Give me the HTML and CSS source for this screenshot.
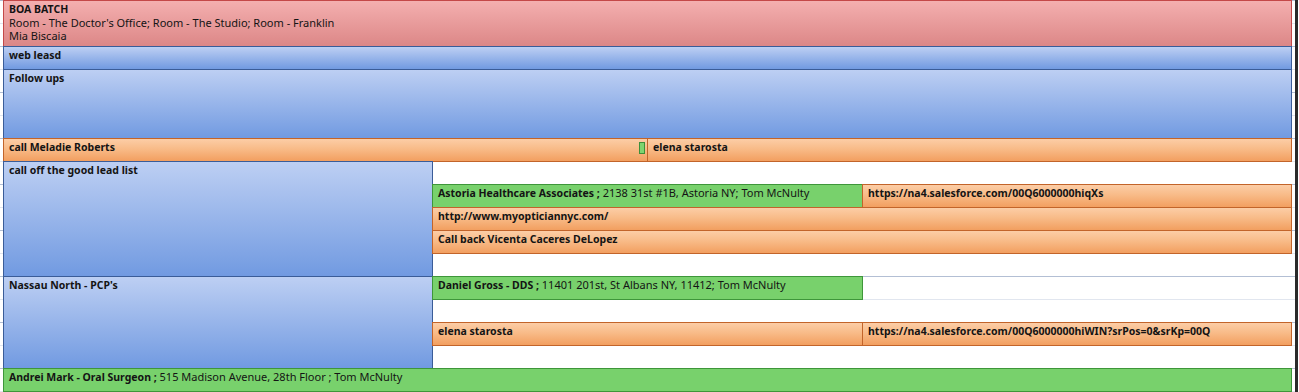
FILE: index.html
```html
<!DOCTYPE html>
<html lang="en">
<head>
    <meta charset="UTF-8">
    <title>Calendar - Day View</title>
    <link rel="stylesheet" href="styles.css">
</head>
<body>
    <div class="day">
        <div class="appt red" style="grid-row: 1 / 3; grid-column: 2 / 6;">
            <b>BOA BATCH</b><br>
            Room - The Doctor's Office; Room - The Studio; Room - Franklin<br>
            Mia Biscaia
        </div>
        <div class="appt blue" style="grid-row: 3; grid-column: 2 / 6;"><b>web leasd</b></div>
        <div class="appt blue" style="grid-row: 4 / 7; grid-column: 2 / 6;"><b>Follow ups</b></div>

        <div class="appt orange" style="grid-row: 7; grid-column: 2 / 4;">
            <b>call Meladie Roberts</b>
            <span class="marker"></span>
        </div>
        <div class="appt orange" style="grid-row: 7; grid-column: 4 / 6;"><b>elena starosta</b></div>

        <div class="appt blue" style="grid-row: 8 / 13; grid-column: 2;"><b>call off the good lead list</b></div>
        <div class="appt green" style="grid-row: 9; grid-column: 3 / 5;">
            <b>Astoria Healthcare Associates ;</b> 2138 31st #1B, Astoria NY; Tom McNulty
        </div>
        <div class="appt orange" style="grid-row: 9; grid-column: 5;"><b>https://na4.salesforce.com/00Q6000000hiqXs</b></div>
        <div class="appt orange" style="grid-row: 10; grid-column: 3 / 6;"><b>http://www.myopticiannyc.com/</b></div>
        <div class="appt orange" style="grid-row: 11; grid-column: 3 / 6;"><b>Call back Vicenta Caceres DeLopez</b></div>

        <div class="appt blue" style="grid-row: 13 / 17; grid-column: 2;"><b>Nassau North - PCP's</b></div>
        <div class="appt green" style="grid-row: 13; grid-column: 3 / 5;">
            <b>Daniel Gross - DDS ;</b> 11401 201st, St Albans NY, 11412; Tom McNulty
        </div>
        <div class="appt orange" style="grid-row: 15; grid-column: 3 / 5;"><b>elena starosta</b></div>
        <div class="appt orange" style="grid-row: 15; grid-column: 5;"><b>https://na4.salesforce.com/00Q6000000hiWIN?srPos=0&amp;srKp=00Q</b></div>

        <div class="appt green" style="grid-row: 17; grid-column: 2 / 6;">
            <b>Andrei Mark - Oral Surgeon ;</b> 515 Madison Avenue, 28th Floor ; Tom McNulty
        </div>
    </div>
</body>
</html>
```

FILE: styles.css
```css
* {
    margin: 0;
    padding: 0;
    box-sizing: border-box;
}

body {
    background: #fff;
    width: 1299px;
    height: 392px;
    overflow: hidden;
    font-family: 'Noto Sans', 'Open Sans', sans-serif;
    font-size: 11px;
    color: #141414;
}

.day {
    display: grid;
    grid-template-columns: 4px 429px 215px 215px 429px 3px;
    grid-template-rows: repeat(17, 23px);
    width: 1298px;
    height: 392px;
    padding-top: 1px;
    border-right: 3px solid #2a2a2a;
    background:
        repeating-linear-gradient(to bottom,
            #b3bfd4 0, #b3bfd4 1px,
            transparent 1px, transparent 23px,
            #e1e6ef 23px, #e1e6ef 24px,
            transparent 24px, transparent 46px);
}

.appt {
    position: relative;
    border: 1px solid;
    margin-top: -1px;
    margin-left: -1px;
    padding: 1px 5px 0;
    line-height: 13px;
    white-space: nowrap;
    overflow: hidden;
}

.appt b {
    font-weight: 700;
    font-size: 10.5px;
}

.red {
    background: linear-gradient(to bottom, #f4afaf, #dc8787);
    border-color: #c44848;
}

.blue {
    background: linear-gradient(to bottom, #bdcff3, #719ae1);
    border-color: #3a5c98;
}

.orange {
    background: linear-gradient(to bottom, #fccda6 0%, #f8bb88 45%, #f29f60 100%);
    border-color: #c2642a;
}

.green {
    background: #78d16c;
    border-color: #3e963a;
}

.marker {
    position: absolute;
    right: 2px;
    top: 3px;
    width: 6px;
    height: 12px;
    background: #7fd46f;
    border: 1px solid #3e8f3a;
}
```
